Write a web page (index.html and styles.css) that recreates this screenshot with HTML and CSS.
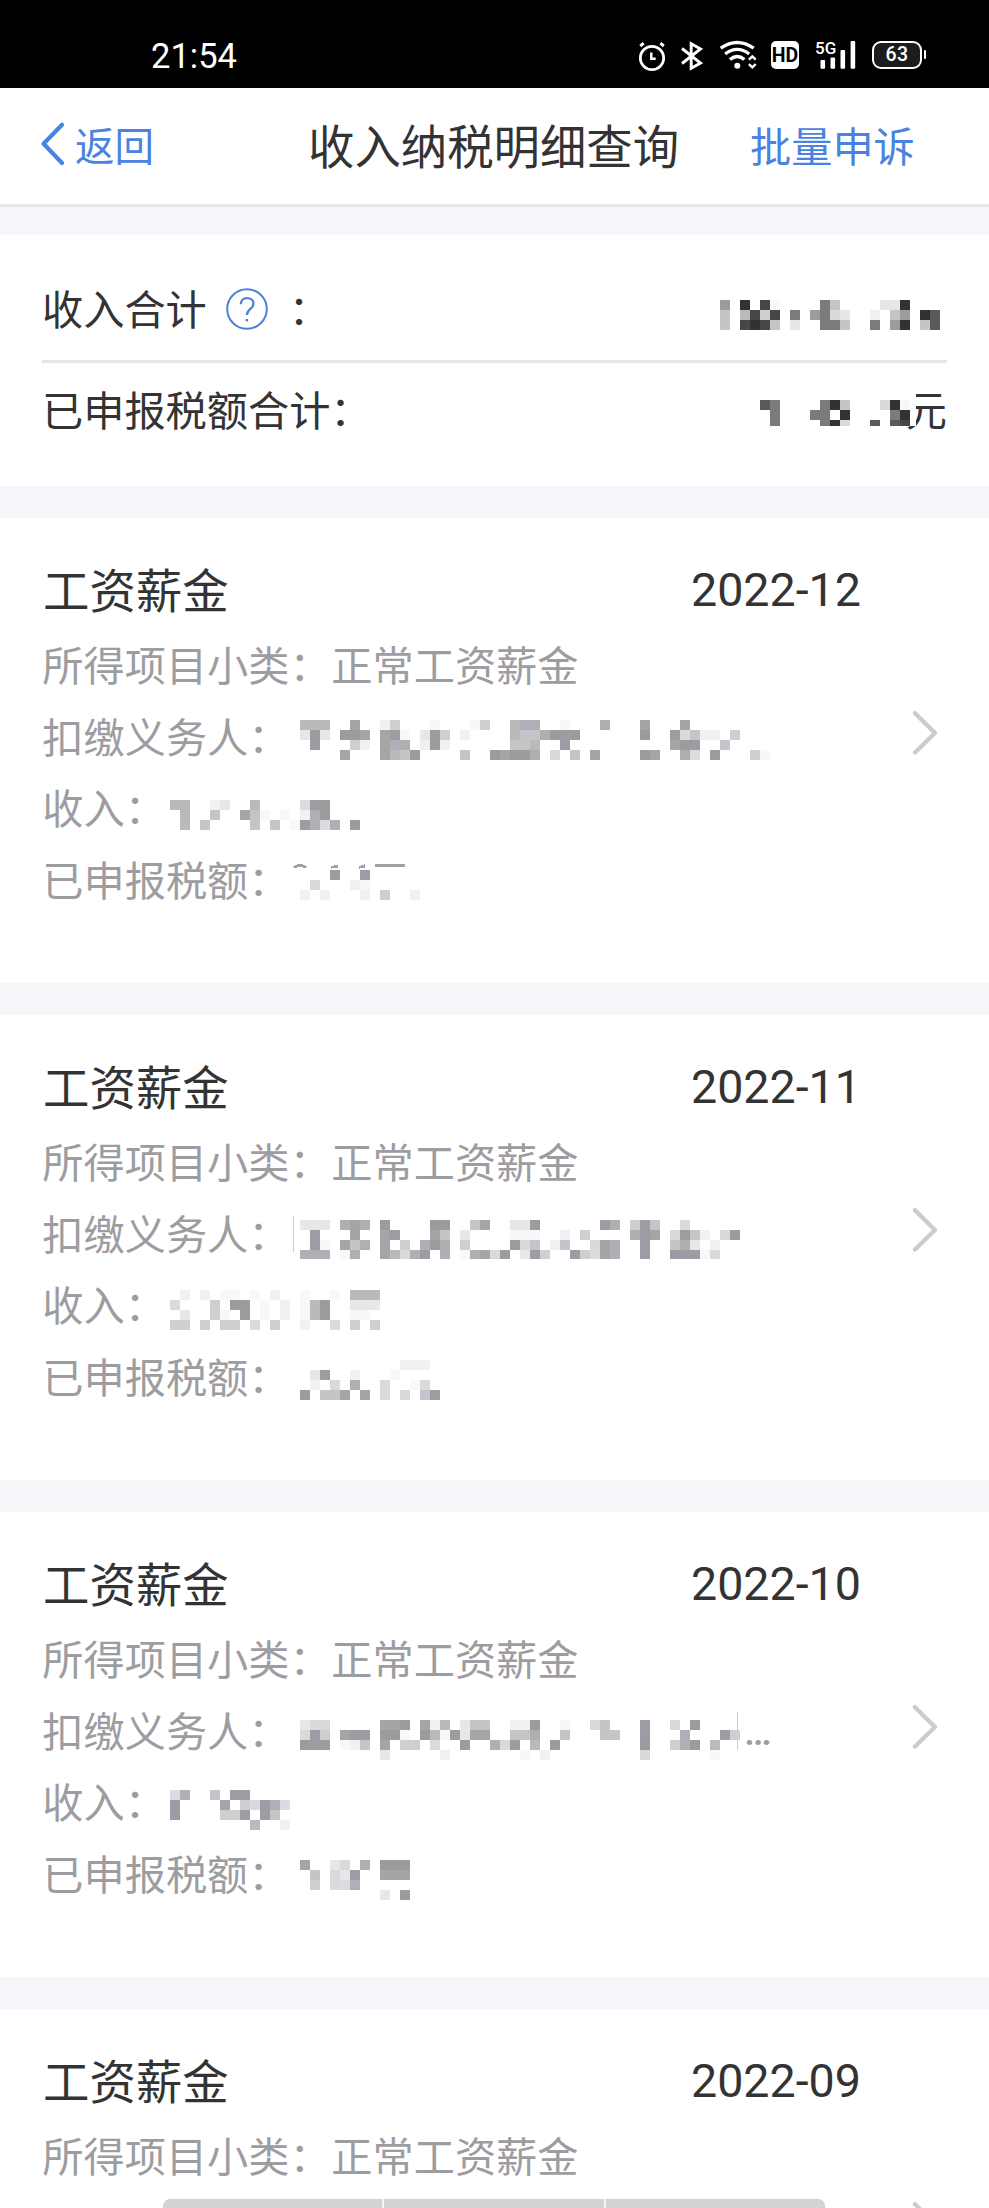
FILE: index.html
```html
<!DOCTYPE html>
<html lang="zh-CN">
<head>
<meta charset="utf-8">
<title>收入纳税明细查询</title>
<link rel="stylesheet" href="styles.css">
</head>
<body>
<div class="statusbar">
  <span class="clock">21:54</span>
  <div class="status-icons">
    <svg class="i-alarm" viewBox="638 40 30 34" width="30" height="34" fill="none" stroke="#fff" stroke-width="2.7" stroke-linecap="round"><circle cx="653" cy="59" r="11.7"/><path d="M652.3 53.5v6.2h4.4" stroke-width="2.4" stroke-linecap="butt"/><path d="M641.3 47l3.4-2.8M664.8 47l-3.4-2.8" stroke-linecap="butt" stroke-width="3"/></svg>
    <svg class="i-bt" viewBox="680 40 26 34" width="26" height="34" fill="none" stroke="#fff" stroke-width="2.9" stroke-linejoin="miter"><path d="M683 49.5l18.5 14.5-9.3 5.2V44.8l9.3 5.2L683 64.5"/></svg>
    <svg class="i-wifi" viewBox="720 40 40 34" width="40" height="34" fill="none" stroke="#fff" stroke-width="3.3"><path d="M721.7 49.2q16.5-11.4 33 0M726.2 55q12-9.2 24 0M731 60.5q7.2-6 14.4 0"/><circle cx="738.3" cy="66.8" r="3" fill="#fff" stroke="none"/><path d="M749.9 60.7l3.4-3.2 3.4 3.2M749.9 65.2l3.4 3.2 3.4-3.2" stroke-width="2.4"/></svg>
    <span class="hd">HD</span>
    <span class="signal"><span class="net">5G</span><svg viewBox="816 40 42 34" width="42" height="34" fill="#fff"><rect x="821.5" y="61" width="4.6" height="8.7" rx="1"/><rect x="831.5" y="58.5" width="4.6" height="11.2" rx="1"/><rect x="841.5" y="51" width="4.6" height="18.7" rx="1"/><rect x="851.6" y="42" width="4.6" height="27.7" rx="1"/></svg></span>
    <span class="battery"><b>63</b><i></i></span>
  </div>
</div>
<header class="navbar">
  <a class="back"><svg viewBox="0 0 24 44" width="24" height="44" fill="none" stroke="#4a83e0" stroke-width="4.2" stroke-linecap="round" stroke-linejoin="round"><path d="M21 2.8L2.6 21.8 21 41"/></svg><span>返回</span></a>
  <h1>收入纳税明细查询</h1>
  <a class="appeal">批量申诉</a>
</header>

<section class="summary">
  <div class="sum-row first">
    <span>收入合计</span>
    <svg class="help" viewBox="0 0 42 42" width="42" height="42" fill="none" stroke="#4a83d6" stroke-width="2"><circle cx="21" cy="21" r="19.8"/><path d="M14.8 16.2c0-3.6 2.6-6 6.2-6s6.5 2.3 6.5 5.5c0 5-6.6 5.5-6.6 11.2M20.9 31v2.6" stroke-width="2.3"/></svg>
    <span>：</span>
    <svg class="mosaic" data-y="17" data-h="77" data-w="227" data-rows="j.n.ma....kf....ccn|f.gmem.k.jkdc..b.fj.nl|f.mnmf.c..kkf..k.jn.fl"></svg>
  </div>
  <div class="sum-row">
    <span>已申报税额合计：</span>
    <svg class="mosaic cover" data-y="37" data-h="63" data-w="156" data-fill="1" data-rows="lk....knf...dna|.k...kk.n....kn|.k....knd..l.lm"></svg>
    <span class="unit">元</span>
  </div>
</section>

<section class="card">
  <div class="info">
    <div class="head"><h2>工资薪金</h2><time>2022-12</time></div>
    <div class="row"><span>所得项目小类：</span><span>正常工资薪金</span></div>
    <div class="row alt"><span class="label">扣缴义务人：</span><svg class="mosaic" data-y="18" data-h="71" data-w="470" data-rows="ggg..i..be...a...ae..gqq..a...h...i...i|cjc.jji.ipa.cje.b....grrhjpj......j..pdrbb.e|.p...eb.iqh.bjb......ffg..p..........ijp..r|....i...igfj....f..jijjh.d.f.i....ji..hs.j...ea"></svg></div>
    <div class="row"><span class="label short">收入：</span><svg class="mosaic" data-y="27" data-h="72" data-w="200" data-rows="gg..bc..g....spj|.g..r..ifa.a.bqj|.g.f....f.f.apqsh.j"></svg></div>
    <div class="row alt"><span class="label">已申报税额：</span><svg class="mosaic" data-y="25" data-h="71" data-w="130" data-rows="...p..p|.d...ba|b.b...b.e..b"><path d="M-6 22.5q6-4.5 12 0M31 22.5l6-1.5v1.5M59 22.5l5-1.5v1.5M75 20.7h30" fill="none" stroke="#a0a0a2" stroke-width="2.6"/></svg></div>
  </div>
  <svg class="chevron" viewBox="0 0 28 48" width="28" height="48"><path d="M3 4.2l20 19.8L3 43.5"/></svg>
</section>

<section class="card">
  <div class="info">
    <div class="head"><h2>工资薪金</h2><time>2022-11</time></div>
    <div class="row"><span>所得项目小类：</span><span>正常工资薪金</span></div>
    <div class="row alt"><span class="label">扣缴义务人：</span><svg class="mosaic" data-y="21" data-h="60" data-w="470" data-rows="ccc.hih.j....jj..fi..ccj......ph.epr..d|.p...i..ip...if.c....aaa..b.e....hpi.dpfb.dj|.pa.ifq.i.e.qjh.e....jdr.br..diq..p..fhc.b|qqq.ah..igdqp.q.ahidj.cpe..pesiq..p..pppad"><path d="M-6.5 17v36" stroke="#ccc"/></svg></div>
    <div class="row"><span class="label short">收入：</span><svg class="mosaic" data-y="20" data-h="72" data-w="220" data-rows=".b.b.aa.a.b..a..a.ggg|d...e.jj.a.b.agj..ccc|.c..ea.j.a.b.agj..aa|ee.e.ee.d.e..b..d.e.e"></svg></div>
    <div class="row alt"><span class="label">已申报税额：</span><svg class="mosaic" data-y="18" data-h="71" data-w="150" data-rows="..........bbb|.cp..b...a|.b.d.h..d..ad|j.ffi.i.d.d.rp"></svg></div>
  </div>
  <svg class="chevron" viewBox="0 0 28 48" width="28" height="48"><path d="M3 4.2l20 19.8L3 43.5"/></svg>
</section>

<section class="card">
  <div class="info">
    <div class="head"><h2>工资薪金</h2><time>2022-10</time></div>
    <div class="row"><span>所得项目小类：</span><span>正常工资薪金</span></div>
    <div class="row alt"><span class="label">扣缴义务人：</span><svg class="mosaic" data-y="24" data-h="71" data-w="438" data-rows="cdd.....iij.ibg.cff..bbj..a..dr...p..d.j|dpe.ipp.jja.jgajcii..ffh..f...ff..p...q...pe|jpp.abr.i.ee.d..j..hdj.g.j........j..eqj.g|........c.....b.......a.b.........d......a"><path d="M437.5 16v38" stroke="#ccc"/></svg><span class="more">…</span></div>
    <div class="row"><span class="label short">收入：</span><svg class="mosaic" data-y="23" data-h="72" data-w="200" data-rows="sq..r.pp|p....i.edpqs|p....eep.pf|........g..b"></svg></div>
    <div class="row alt"><span class="label">已申报税额：</span><svg class="mosaic" data-y="21" data-h="71" data-w="130" data-rows="i..cd.h.jjj|.f.dcp..iii|.e.dsq|........c.j"></svg></div>
  </div>
  <svg class="chevron" viewBox="0 0 28 48" width="28" height="48"><path d="M3 4.2l20 19.8L3 43.5"/></svg>
</section>

<section class="card last">
  <div class="info">
    <div class="head"><h2>工资薪金</h2><time>2022-09</time></div>
    <div class="row"><span>所得项目小类：</span><span>正常工资薪金</span></div>
  </div>
  <svg class="chevron" viewBox="0 0 28 8" width="28" height="8"><path d="M3 4.2l20 19.8L3 43.5"/></svg>
</section>

<div class="gesture"><i></i><i></i><i></i></div>
<script src="script.js"></script>
</body>
</html>
```
FILE: styles.css
```css
* { box-sizing: border-box; margin: 0; padding: 0; }
body {
  position: relative;
  width: 989px;
  height: 2208px;
  overflow: hidden;
  background: #f5f6fa;
  color: #333;
  font-family: "Noto Sans CJK SC", sans-serif;
  font-size: 41.2px;
}
svg { flex: none; display: block; }

.statusbar {
  display: flex;
  justify-content: space-between;
  height: 88px;
  padding: 39px 63px 0 151px;
  background: #000;
  color: #fff;
  font-family: Roboto, sans-serif;
}
.clock { font-size: 34.5px; line-height: 34px; }
.status-icons { display: flex; height: 34px; }
.i-bt { margin-left: 12px; }
.i-wifi { margin-left: 14px; }
.hd {
  width: 28px;
  height: 28px;
  margin: 2px 0 0 12px;
  border-radius: 5px;
  background: #fff;
  color: #000;
  font: 700 19.5px/29px Roboto, sans-serif;
  text-align: center;
}
.signal { position: relative; margin-left: 16px; }
.net {
  position: absolute;
  left: 0;
  top: 1px;
  font: 500 17px/17px Roboto, sans-serif;
}
.battery {
  position: relative;
  width: 50px;
  height: 28px;
  margin: 2px 4px 0 15px;
  border: 2.5px solid #fff;
  border-radius: 9px;
  background: #1c1c1c;
  text-align: center;
}
.battery b { display: block; font: 500 19.5px/24px Roboto, sans-serif; letter-spacing: .5px; }
.battery i {
  position: absolute;
  right: -6px;
  top: 7px;
  width: 2.5px;
  height: 9px;
  border-radius: 2px;
  background: #fff;
}

.navbar {
  display: grid;
  grid-template-columns: 267px 1fr 239px;
  align-items: center;
  height: 119px;
  padding: 0 0 4px 41px;
  border-bottom: 3px solid #e6e6e6;
  background: #fff;
}
.navbar a { display: flex; align-items: center; color: #4a83e0; line-height: 60px; }
.back span { margin-left: 10px; font-size: 39.5px; }
.navbar h1 { font-size: 46.4px; font-weight: 400; line-height: 64px; white-space: nowrap; }

.summary {
  height: 251px;
  margin-top: 28px;
  padding: 48px 42px 0;
  background: #fff;
}
.sum-row { display: flex; line-height: 96px; height: 100px; white-space: pre; }
.sum-row > span { margin-top: -24px; }
.sum-row > .help { margin: 5px 0 0 19px; }
.sum-row.first { height: 80px; border-bottom: 3px solid #e6e6e6; }
.sum-row .help + span { margin-left: 21px; }
.sum-row .mosaic { margin-left: auto; }
.sum-row:not(.first) > span { margin-top: -3px; }
.sum-row .cover { position: relative; z-index: 1; margin-right: -10px; }

.card {
  display: flex;
  justify-content: space-between;
  height: 465px;
  margin-top: 32px;
  padding: 34px 49px 0 43px;
  background: #fff;
}
.card.last { height: 199px; overflow: hidden; }
.head { display: flex; height: 78px; line-height: 72px; }
.head h2 { width: 648px; font-size: 46.4px; font-weight: 400; }
.head time { font: 46.6px/76px Roboto, sans-serif; }
.row { display: flex; height: 72px; color: #9d9da1; line-height: 66px; white-space: nowrap; }
.row.alt { height: 71px; }
.label { width: 257px; }
.label.short { width: 127px; }
.row > span:first-child { margin-left: -.7px; margin-right: .7px; }
.mosaic { overflow: visible; }
.more { margin-left: 6px; font: 500 39px/72px Roboto, sans-serif; }
.chevron { margin-top: 157px; fill: none; stroke: #ccc; stroke-width: 4.4; stroke-linecap: round; stroke-linejoin: round; }

.gesture {
  position: absolute;
  left: 163px;
  bottom: 0;
  display: flex;
  gap: 2px;
  width: 662px;
  height: 9px;
  border-radius: 7px 7px 0 0;
  background: #f4f4f4;
  overflow: hidden;
}
.gesture i { flex: 1; background: #d3d3d3; }
```
FILE: script.js
```js
// Masked values: every character is the shade of one 10px block.
const SHADES = {
  a: '#f8f8f8', b: '#f1f1f1', c: '#e7e7e9', d: '#dadada', e: '#cfcfcf', f: '#c5c5c5',
  g: '#bababa', h: '#afafaf', i: '#a5a5a6', j: '#9c9c9c', k: '#7b7b7b', l: '#5a5a5a',
  m: '#474747', n: '#323232', p: '#9d9ba4', q: '#b0aeb7', r: '#c5c4cc', s: '#dcdbe1'
};
const NS = 'http://www.w3.org/2000/svg';

function block(svg, x, y, w, h, fill) {
  const r = document.createElementNS(NS, 'rect');
  Object.entries({ x, y, width: w, height: h, fill }).forEach(([k, v]) => r.setAttribute(k, v));
  svg.appendChild(r);
}

document.querySelectorAll('.mosaic').forEach(svg => {
  const { rows, y, h, w, fill } = svg.dataset;
  svg.setAttribute('width', w);
  svg.setAttribute('height', h);
  svg.setAttribute('shape-rendering', 'crispEdges');
  if (fill) block(svg, 0, 0, w, h, '#fff');
  rows.split('|').forEach((line, i) => {
    const top = +y + i * 10;
    [...line].forEach((c, k) => {
      if (SHADES[c]) block(svg, k * 10, top, 10, Math.min(10, h - top), SHADES[c]);
    });
  });
});
```
